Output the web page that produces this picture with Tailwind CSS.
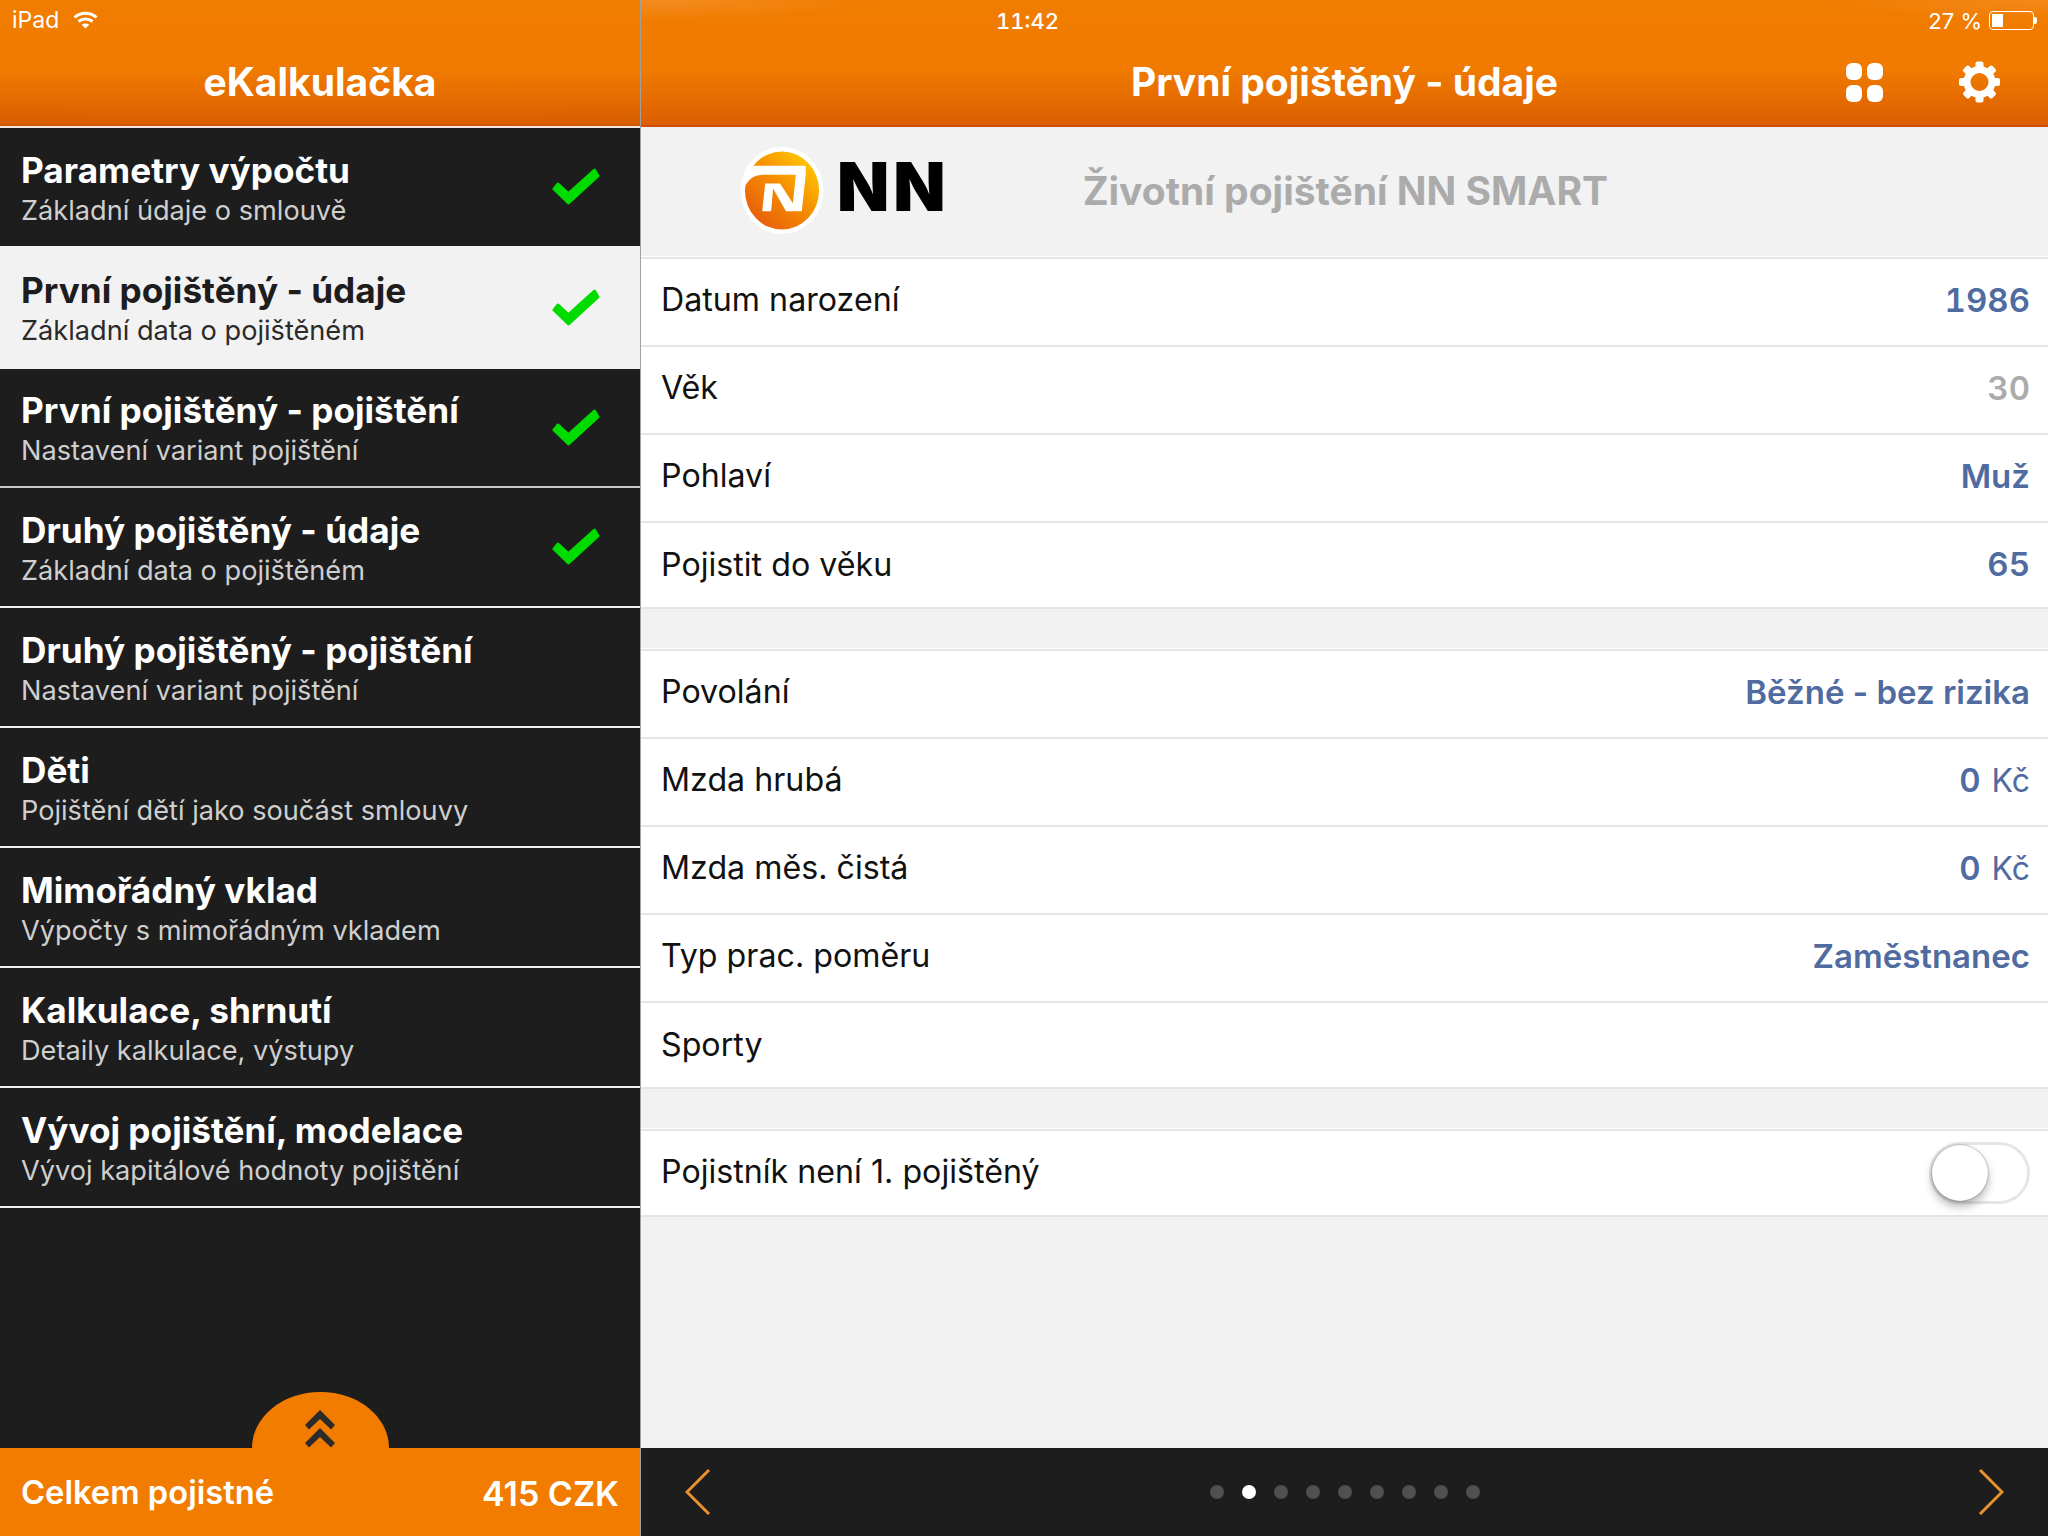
<!DOCTYPE html>
<html lang="cs">
<head>
<meta charset="utf-8">
<script src="https://cdn.jsdelivr.net/npm/@tailwindcss/browser@4"></script>
<title>eKalkulačka</title>
</head>
<body class="m-0 bg-[#f2f2f2]">
<div class="flex h-[1536px] w-[2048px] overflow-hidden font-['Inter','Liberation_Sans',sans-serif]">

  <!-- LEFT -->
  <aside class="flex w-[641px] shrink-0 flex-col border-r border-[#a0a0a0] bg-[#1d1d1d]">
    <header class="h-[128px] shrink-0 border-b-2 border-[#f0e6df] bg-[radial-gradient(ellipse_at_100%_100%,#d0600080_0,transparent_14%),radial-gradient(ellipse_at_0_100%,#d0600060_0,transparent_14%),linear-gradient(to_bottom,#f07c00,#f07b00_55%,#dc5e00_98%,#cf4c00)] text-white">
      <div class="flex h-[38px] items-center gap-[14px] pl-[12px] pt-[3px] text-[23px] leading-none">
        <span>iPad</span>
        <svg class="mt-[-2px]" width="25" height="18" viewBox="0 0 25 18" fill="none" stroke="#fff" stroke-width="3"><path d="M1.500 6.500c6-5.600 16-5.600 22 0"/><path d="M5.500 10.500c4-3.400 10-3.400 14 0"/><path d="M12.500 17.500l-3.800-3.800c2.200-1.600 5.400-1.600 7.600 0z" fill="#fff" stroke="none"/></svg>
      </div>
      <h1 class="mt-[20px] text-center text-[39px] font-bold leading-[48px]">eKalkulačka</h1>
    </header>

    <nav class="flex flex-col">
      <a class="flex h-[118px] items-center justify-between pl-[21px] pr-[40px] text-white">
        <div class="pt-[2px]"><div class="text-[35.2px] font-bold leading-[42px]">Parametry výpočtu</div><div class="mt-[3px] text-[27.15px] leading-[34px] text-[#cfcfcf]">Základní údaje o smlouvě</div></div>
        <svg width="48" height="38" viewBox="0 0 48 38" fill="#00dc00" stroke="#00dc00" stroke-width="3" stroke-linejoin="round"><path d="M2 21L6 16L16.500 25.500L42.500 2L46 8L16.500 35z"/></svg>
      </a>
      <a class="flex h-[123px] items-center justify-between bg-[#f2f2f2] pl-[21px] pr-[40px] text-[#1d1d1d]">
        <div class="pt-[2px]"><div class="text-[35.2px] font-bold leading-[42px]">První pojištěný - údaje</div><div class="mt-[3px] text-[27.15px] leading-[34px] text-[#2a2a2a]">Základní data o pojištěném</div></div>
        <svg width="48" height="38" viewBox="0 0 48 38" fill="#00dc00" stroke="#00dc00" stroke-width="3" stroke-linejoin="round"><path d="M2 21L6 16L16.500 25.500L42.500 2L46 8L16.500 35z"/></svg>
      </a>
      <a class="flex h-[119px] items-center justify-between border-b-2 border-[#c8c8c8] pl-[21px] pr-[40px] text-white">
        <div class="pt-[2px]"><div class="text-[35.2px] font-bold leading-[42px]">První pojištěný - pojištění</div><div class="mt-[3px] text-[27.15px] leading-[34px] text-[#cfcfcf]">Nastavení variant pojištění</div></div>
        <svg width="48" height="38" viewBox="0 0 48 38" fill="#00dc00" stroke="#00dc00" stroke-width="3" stroke-linejoin="round"><path d="M2 21L6 16L16.500 25.500L42.500 2L46 8L16.500 35z"/></svg>
      </a>
      <a class="flex h-[120px] items-center justify-between border-b-2 border-[#f0f0f0] pl-[21px] pr-[40px] text-white">
        <div class="pt-[2px]"><div class="text-[35.2px] font-bold leading-[42px]">Druhý pojištěný - údaje</div><div class="mt-[3px] text-[27.15px] leading-[34px] text-[#cfcfcf]">Základní data o pojištěném</div></div>
        <svg width="48" height="38" viewBox="0 0 48 38" fill="#00dc00" stroke="#00dc00" stroke-width="3" stroke-linejoin="round"><path d="M2 21L6 16L16.500 25.500L42.500 2L46 8L16.500 35z"/></svg>
      </a>
      <a class="flex h-[120px] items-center border-b-2 border-[#f0f0f0] pl-[21px] text-white">
        <div class="pt-[2px]"><div class="text-[35.2px] font-bold leading-[42px]">Druhý pojištěný - pojištění</div><div class="mt-[3px] text-[27.15px] leading-[34px] text-[#cfcfcf]">Nastavení variant pojištění</div></div>
      </a>
      <a class="flex h-[120px] items-center border-b-2 border-[#f0f0f0] pl-[21px] text-white">
        <div class="pt-[2px]"><div class="text-[35.2px] font-bold leading-[42px]">Děti</div><div class="mt-[3px] text-[27.15px] leading-[34px] text-[#cfcfcf]">Pojištění dětí jako součást smlouvy</div></div>
      </a>
      <a class="flex h-[120px] items-center border-b-2 border-[#f0f0f0] pl-[21px] text-white">
        <div class="pt-[2px]"><div class="text-[35.2px] font-bold leading-[42px]">Mimořádný vklad</div><div class="mt-[3px] text-[27.15px] leading-[34px] text-[#cfcfcf]">Výpočty s mimořádným vkladem</div></div>
      </a>
      <a class="flex h-[120px] items-center border-b-2 border-[#f0f0f0] pl-[21px] text-white">
        <div class="pt-[2px]"><div class="text-[35.2px] font-bold leading-[42px]">Kalkulace, shrnutí</div><div class="mt-[3px] text-[27.15px] leading-[34px] text-[#cfcfcf]">Detaily kalkulace, výstupy</div></div>
      </a>
      <a class="flex h-[120px] items-center border-b-2 border-[#f0f0f0] pl-[21px] text-white">
        <div class="pt-[2px]"><div class="text-[35.2px] font-bold leading-[42px]">Vývoj pojištění, modelace</div><div class="mt-[3px] text-[27.15px] leading-[34px] text-[#cfcfcf]">Vývoj kapitálové hodnoty pojištění</div></div>
      </a>
    </nav>

    <div class="flex flex-1 items-end justify-center">
      <div class="flex h-[56px] w-[137px] justify-center rounded-[68px_68px_0_0/56px_56px_0_0] bg-[#f17c00] pt-[18px]">
        <svg width="30" height="38" viewBox="0 0 30 38" fill="#2b2b2b"><path d="M15 0l15 15-4 4.500L15 9 4 19.500 0 15z"/><path d="M15 18l15 15-4 4.500L15 27 4 37.500 0 33z"/></svg>
      </div>
    </div>
    <div class="flex h-[88px] shrink-0 items-center justify-between bg-[#f17c00] pl-[21px] pr-[21px] pt-[2px] font-semibold text-white">
      <span class="text-[32.7px]">Celkem pojistné</span><span class="text-[34px]">415 CZK</span>
    </div>
  </aside>

  <!-- RIGHT -->
  <main class="flex min-w-0 flex-1 flex-col bg-[#f2f2f2]">
    <header class="h-[127px] shrink-0 border-b-2 border-[#cf4c00] bg-[radial-gradient(ellipse_at_0_0,#f59a3a90_0,transparent_12%),radial-gradient(ellipse_at_100%_0,#f59a3a70_0,transparent_12%),linear-gradient(to_bottom,#f07c00,#f07b00_55%,#dc5e00)] text-white">
      <div class="flex h-[38px] items-center pt-[3px] text-[22px] leading-none">
        <span class="ml-[355px] font-medium tabular-nums">11:42</span>
        <div class="ml-auto mr-[11px] flex items-center gap-[7px]">
          <span>27 %</span>
          <div class="flex items-center">
            <div class="h-[19px] w-[45px] rounded-[4px] border border-white p-[2px]"><div class="h-full w-[11px] bg-white"></div></div>
            <div class="h-[7px] w-[3px] rounded-r-[2px] bg-white"></div>
          </div>
        </div>
      </div>
      <div class="relative">
        <h2 class="w-full pt-[20px] text-center text-[39px] font-bold leading-[48px]">První pojištěný - údaje</h2>
        <div class="absolute right-[48px] top-[22px] flex items-center gap-[76px]">
          <div class="grid h-[39px] w-[37px] grid-cols-2 gap-[5px]">
            <span class="rounded-[6px] bg-white"></span><span class="rounded-[6px] bg-white"></span>
            <span class="rounded-[6px] bg-white"></span><span class="rounded-[6px] bg-white"></span>
          </div>
          <svg width="41" height="44" viewBox="-20.500 -22 41 44" fill="#fff">
            <circle r="12.500" fill="none" stroke="#fff" stroke-width="7"/>
            <rect x="-4" y="-20.500" width="8" height="8" rx="2"/>
            <rect x="-4" y="-20.500" width="8" height="8" rx="2" transform="rotate(45)"/>
            <rect x="-4" y="-20.500" width="8" height="8" rx="2" transform="rotate(90)"/>
            <rect x="-4" y="-20.500" width="8" height="8" rx="2" transform="rotate(135)"/>
            <rect x="-4" y="-20.500" width="8" height="8" rx="2" transform="rotate(180)"/>
            <rect x="-4" y="-20.500" width="8" height="8" rx="2" transform="rotate(225)"/>
            <rect x="-4" y="-20.500" width="8" height="8" rx="2" transform="rotate(270)"/>
            <rect x="-4" y="-20.500" width="8" height="8" rx="2" transform="rotate(315)"/>
          </svg>
        </div>
      </div>
    </header>

    <div class="flex h-[130px] shrink-0 items-center">
      <div class="mb-[3px] ml-[99px] flex items-center">
        <svg width="84" height="87" viewBox="0 0 84 88">
          <defs>
            <linearGradient id="nnGrad" x1="0.850" y1="0.100" x2="0.150" y2="0.900"><stop offset="0" stop-color="#ffc400"/><stop offset="0.500" stop-color="#f58a00"/><stop offset="1" stop-color="#e85f0c"/></linearGradient>
          </defs>
          <ellipse cx="42" cy="44" rx="42" ry="44" fill="#fff"/>
          <ellipse cx="42" cy="44" rx="37.500" ry="39.500" fill="url(#nnGrad)"/>
          <path d="M6 19L66 19L66 28L62 65L46 65L33 42L31 65L22 65L25 37L40 37L53 57L56 28L24 28C14 28 8 32 5 40z" fill="#fff"/>
        </svg>
        <span class="ml-[13px] mt-[-9px] text-[68px] font-black leading-none tracking-[4px] text-black">NN</span>
      </div>
      <h3 class="mb-[4px] ml-[133px] text-[39px] font-bold leading-none text-[#ababab]">Životní pojištění NN SMART</h3>
    </div>

    <section class="border-y-2 border-[#e4e4e4] bg-white text-[32.2px] text-[#111] shadow-[0_-1px_0_#fff]">
      <div class="flex h-[88px] items-center justify-between border-b-2 border-[#e4e4e4] pb-[3px] pl-[20px] pr-[18px]"><span>Datum narození</span><span class="text-[33px] font-semibold tabular-nums text-[#4f6b9f]">1986</span></div>
      <div class="flex h-[88px] items-center justify-between border-b-2 border-[#e4e4e4] pb-[3px] pl-[20px] pr-[18px]"><span>Věk</span><span class="text-[33px] font-semibold tabular-nums text-[#ababab]">30</span></div>
      <div class="flex h-[88px] items-center justify-between border-b-2 border-[#e4e4e4] pb-[3px] pl-[20px] pr-[18px]"><span>Pohlaví</span><span class="text-[33px] font-semibold text-[#4f6b9f]">Muž</span></div>
      <div class="flex h-[84px] items-center justify-between pl-[20px] pr-[18px]"><span>Pojistit do věku</span><span class="text-[33px] font-semibold tabular-nums text-[#4f6b9f]">65</span></div>
    </section>
    <div class="h-[40px] shrink-0"></div>
    <section class="border-y-2 border-[#e4e4e4] bg-white text-[32.2px] text-[#111] shadow-[0_-1px_0_#fff]">
      <div class="flex h-[88px] items-center justify-between border-b-2 border-[#e4e4e4] pb-[3px] pl-[20px] pr-[18px]"><span>Povolání</span><span class="text-[33px] font-semibold text-[#4f6b9f]">Běžné - bez rizika</span></div>
      <div class="flex h-[88px] items-center justify-between border-b-2 border-[#e4e4e4] pb-[3px] pl-[20px] pr-[18px]"><span>Mzda hrubá</span><span class="text-[33px] font-semibold tabular-nums text-[#4f6b9f]">0 <span class="ml-[2px] text-[32px] font-normal">Kč</span></span></div>
      <div class="flex h-[88px] items-center justify-between border-b-2 border-[#e4e4e4] pb-[3px] pl-[20px] pr-[18px]"><span>Mzda měs. čistá</span><span class="text-[33px] font-semibold tabular-nums text-[#4f6b9f]">0 <span class="ml-[2px] text-[32px] font-normal">Kč</span></span></div>
      <div class="flex h-[88px] items-center justify-between border-b-2 border-[#e4e4e4] pb-[3px] pl-[20px] pr-[18px]"><span>Typ prac. poměru</span><span class="text-[33px] font-semibold text-[#4f6b9f]">Zaměstnanec</span></div>
      <div class="flex h-[84px] items-center pl-[20px] pr-[18px]"><span>Sporty</span></div>
    </section>
    <div class="h-[40px] shrink-0"></div>
    <section class="border-y-2 border-[#e4e4e4] bg-white text-[32.2px] text-[#111] shadow-[0_-1px_0_#fff]">
      <div class="flex h-[84px] items-center justify-between pl-[20px] pr-[18px]">
        <span class="pb-[1px]">Pojistník není 1. pojištěný</span>
        <div class="flex h-[62px] w-[101px] items-center rounded-full border-[3px] border-[#e6e6e6] bg-white">
          <div class="h-[56px] w-[56px] rounded-full bg-white shadow-[0_6px_10px_rgba(0,0,0,0.28),0_0_2px_rgba(0,0,0,0.5)]"></div>
        </div>
      </div>
    </section>

    <div class="flex-1"></div>

    <footer class="flex h-[88px] shrink-0 items-center justify-between bg-[#1d1d1d] pl-[44px] pr-[44px]">
      <svg width="26" height="46" viewBox="0 0 26 46" fill="none" stroke="#e8922e" stroke-width="3"><path d="M24 1L2 23l22 22"/></svg>
      <div class="flex items-center gap-[18px]">
        <span class="h-[14px] w-[14px] rounded-full bg-[#505050]"></span>
        <span class="h-[14px] w-[14px] rounded-full bg-white"></span>
        <span class="h-[14px] w-[14px] rounded-full bg-[#505050]"></span>
        <span class="h-[14px] w-[14px] rounded-full bg-[#505050]"></span>
        <span class="h-[14px] w-[14px] rounded-full bg-[#505050]"></span>
        <span class="h-[14px] w-[14px] rounded-full bg-[#505050]"></span>
        <span class="h-[14px] w-[14px] rounded-full bg-[#505050]"></span>
        <span class="h-[14px] w-[14px] rounded-full bg-[#505050]"></span>
        <span class="h-[14px] w-[14px] rounded-full bg-[#505050]"></span>
      </div>
      <svg width="26" height="46" viewBox="0 0 26 46" fill="none" stroke="#e8922e" stroke-width="3"><path d="M2 1l22 22L2 45"/></svg>
    </footer>
  </main>
</div>
</body>
</html>
